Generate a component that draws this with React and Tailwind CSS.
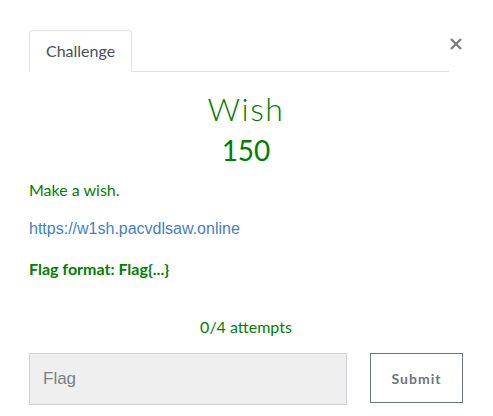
export default function App() {
  return (
    <div className="w-[493px] h-[416px] bg-white pl-[29px] pr-[30px] pt-[30px] font-['Lato','Noto_Sans',sans-serif] text-[16px]">
      <div className="flex items-start">
        <div className="w-[420px] flex border-b border-[#dee2e6]">
          <div className="-mb-px h-[42px] px-[16px] flex items-center border border-[#dee2e6] border-b-white rounded-t-[4px] bg-white text-[#495057] text-[16px]">
            Challenge
          </div>
        </div>
        <button className="ml-[1px] mt-[8px] w-[12px] h-[12px] flex items-center justify-center">
          <svg width="12" height="12" viewBox="0 0 12 12">
            <path d="M1 1 L11 11 M11 1 L1 11" stroke="#7d7d7d" strokeWidth="2.4" />
          </svg>
        </button>
      </div>
      <div className="text-center text-[#008000]">
        <div className="mt-[17px] text-[32px] leading-[40px] font-light tracking-[1.5px]">Wish</div>
        <div className="mt-[4px] text-[28px] leading-[34px]">150</div>
      </div>
      <div className="text-[#008000] mt-[13px] leading-[20px]">Make a wish.</div>
      <div className="mt-[19px] leading-[20px] font-['Liberation_Sans',Arial,sans-serif] text-[#3f7fcb]">
        https://w1sh.pacvdlsaw.online
      </div>
      <div className="mt-[20px] leading-[20px] font-bold text-[#008000]">Flag format: Flag{"{...}"}</div>
      <div className="mt-[38px] leading-[20px] text-center text-[#008000]">0/4 attempts</div>
      <div className="mt-[16px] flex items-start">
        <div className="w-[318px] h-[52px] bg-[#efefef] border border-[#cfd2d6] flex items-center pl-[13px] font-['Liberation_Sans',Arial,sans-serif] text-[17px] text-[#7a7f86]">
          Flag
        </div>
        <button className="ml-[23px] w-[93px] h-[50px] border border-[#6c757d] bg-white text-[14px] font-bold tracking-[1px] text-[#6c757d]">
          Submit
        </button>
      </div>
    </div>
  );
}
